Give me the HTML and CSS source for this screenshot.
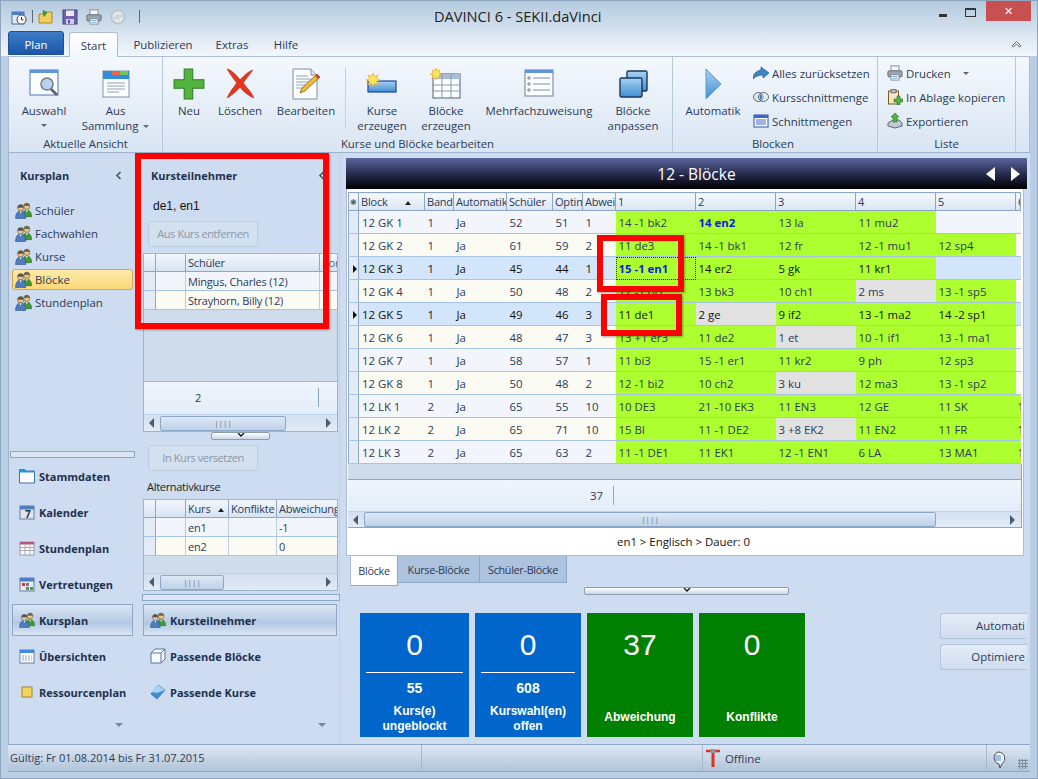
FILE: index.html
```html
<!DOCTYPE html>
<html lang="de">
<head>
    <meta charset="UTF-8">
    <meta name="viewport" content="width=device-width, initial-scale=1.0">
    <title>DAVINCI 6 - SEKII.daVinci</title>
    <link rel="stylesheet" href="styles.css">
</head>
<body>
<svg class="defs" width="0" height="0">
    <defs>
        <linearGradient id="blueFill" x1="0" y1="0" x2="0" y2="1"><stop offset="0" stop-color="#a9d2f2"/><stop offset="1" stop-color="#3f8fd0"/></linearGradient>
        <symbol id="people" viewBox="0 0 18 18">
            <circle cx="12.500" cy="4.500" r="3.300" fill="#f0c48f" stroke="#6b5a3a" stroke-width=".6"/>
            <path d="M9.300 4.500c0-2.300 1.500-3.500 3.200-3.500s3.200 1.200 3.200 3.500c-2-.2-4.400-.2-6.400 0z" fill="#6e6a50"/>
            <path d="M8 15.500c0-5 2-7 4.500-7s5 2 5 7z" fill="#3f9a35" stroke="#24651e" stroke-width=".6"/>
            <path d="M11.500 8.600l1 2.600 1-2.600z" fill="#fff"/>
            <circle cx="6" cy="6.200" r="3.400" fill="#f0c48f" stroke="#5c5c50" stroke-width=".6"/>
            <path d="M2.700 6.200c0-2.400 1.500-3.600 3.300-3.600s3.300 1.200 3.300 3.600c-2-.3-4.600-.3-6.600 0z" fill="#55584c"/>
            <path d="M.6 17.500c0-5.500 2.300-8 5.400-8s5.400 2.500 5.400 8z" fill="#4f7cc0" stroke="#2c4c85" stroke-width=".6"/>
            <path d="M5 9.700l1 2.800 1-2.800z" fill="#fff"/>
        </symbol>
        <symbol id="printer" viewBox="0 0 18 18">
            <rect x="4.500" y="1" width="9" height="6" fill="#f3f5f8" stroke="#7e8791"/>
            <rect x="1" y="6.500" width="16" height="7" rx="1.500" fill="#9aa3ad" stroke="#5f6872"/>
            <rect x="4.500" y="11" width="9" height="6" fill="#fff" stroke="#7e8791"/>
            <path d="M6 13h6M6 15h6" stroke="#6fa7d8"/>
        </symbol>
    </defs>
</svg>
<div class="window">
    <header class="titlebar">
        <div class="quick">
            <svg class="ico16" viewBox="0 0 16 16"><rect x="1" y="3" width="12" height="12" fill="#dfeafa" stroke="#4c6f9e"/><rect x="1" y="3" width="12" height="3" fill="#4f7fc0"/><circle cx="10.500" cy="10.500" r="4.500" fill="#fff" stroke="#54606e" stroke-width="1.200"/><path d="M10.500 8v2.800h2" fill="none" stroke="#333"/></svg>
            <span class="quick-sep"></span>
            <svg class="ico16" viewBox="0 0 16 16"><path d="M1 5h5l1-2h7v11H1z" fill="#f1cf5e" stroke="#a8892c"/><path d="M5 1.500l4 2-3 4z" fill="#3ea33a" stroke="#236d21" stroke-width=".6"/></svg>
            <svg class="ico16" viewBox="0 0 16 16"><rect x="1" y="1" width="14" height="14" fill="#6e62a8" stroke="#4b427f"/><rect x="4" y="1.500" width="8" height="5.500" fill="#ece9f6"/><rect x="4" y="10" width="8" height="5" fill="#cfcbe4"/><rect x="6" y="11" width="2" height="3.500" fill="#5a4f96"/></svg>
            <svg class="ico16" viewBox="0 0 18 18"><use href="#printer"/></svg>
            <svg class="ico16" viewBox="0 0 16 16"><circle cx="8" cy="8" r="7" fill="#cfd6dc" stroke="#b4bdc6"/><path d="M4 8a4 4 0 017-2.500M12 8a4 4 0 01-7 2.500" fill="none" stroke="#eef2f5" stroke-width="1.500"/></svg>
            <span class="quick-sep quick-sep-last"></span>
        </div>
        <div class="apptitle">DAVINCI 6 - SEKII.daVinci</div>
        <div class="winbtns">
            <span class="btn-min"></span>
            <span class="btn-max"></span>
            <span class="btn-close">✕</span>
        </div>
    </header>

    <nav class="tabs">
        <span class="tab-plan">Plan</span>
        <span class="tab tab-active">Start</span>
        <span class="tab tab-pub">Publizieren</span>
        <span class="tab tab-ext">Extras</span>
        <span class="tab tab-hlp">Hilfe</span>
        <svg class="collapse" width="11" height="8" viewBox="0 0 11 8"><path d="M1 6l4.500-4.500L10 6l-1.500 1-3-3-3 3z" fill="#fff" stroke="#444" stroke-width=".8"/></svg>
    </nav>

    <section class="ribbon">
        <div class="group group-view">
            <div class="group-btns">
                <div class="rbtn">
                    <svg class="ico32" viewBox="0 0 32 32"><rect x="2" y="2" width="28" height="25" fill="#fbfdff" stroke="#4c76b5"/><rect x="2" y="2" width="28" height="3" fill="#5f95dc"/><circle cx="19" cy="16" r="6" fill="#b7d3ee" stroke="#77808a" stroke-width="1.600"/><path d="M23 21l6 6" stroke="#5b6068" stroke-width="2.500"/></svg>
                    <span>Auswahl</span><i class="caret caret-below"></i>
                </div>
                <div class="rbtn">
                    <svg class="ico32" viewBox="0 0 32 32"><rect x="3" y="3" width="26" height="26" fill="#fff" stroke="#7f95ae"/><rect x="3" y="3" width="26" height="8" fill="#2f8edc"/><rect x="12" y="3" width="8" height="4" fill="#e2674e"/><rect x="20" y="3" width="8" height="4" fill="#79c255"/><path d="M7 15h18M7 18h18M7 21h18M7 24h12" stroke="#8ea2b8"/></svg>
                    <span>Aus<br>Sammlung <i class="caret"></i></span>
                </div>
            </div>
            <div class="group-label">Aktuelle Ansicht</div>
        </div>

        <div class="group group-edit">
            <div class="group-btns">
                <div class="rbtn">
                    <svg class="ico32" viewBox="0 0 30 30"><path d="M10.500 1h8v10h10.500v8H18.500v10h-8V19H1v-8h9.500z" fill="#54b33e" stroke="#2f7d24"/></svg>
                    <span>Neu</span>
                </div>
                <div class="rbtn">
                    <svg class="ico32" viewBox="0 0 30 30"><path d="M3 1c4 1 8 5 12 10 4-4 8-8 12-9-3 4-7 9-9 12 3 4 8 9 10 14-5-2-10-6-13-10-4 4-8 8-12 10 2-5 6-10 9-14C9 10 5 5 3 1z" fill="#e5351f" stroke="#b62512" stroke-width=".6"/></svg>
                    <span>Löschen</span>
                </div>
                <div class="rbtn">
                    <svg class="ico32" viewBox="0 0 32 32"><path d="M3 1h18l6 6v24H3z" fill="#fbfdff" stroke="#7f8ea0"/><path d="M21 1v6h6" fill="#dfe8f2" stroke="#7f8ea0"/><path d="M6 8h12M6 11h15M6 14h12M6 17h9M6 20h7" stroke="#8ea2b8"/><path d="M27 6l3 3-15 14-5 2 2-5z" fill="#f0b93a" stroke="#8a6418" stroke-width=".8"/><path d="M27 6l3 3-2 2-3-3z" fill="#d9452e"/></svg>
                    <span>Bearbeiten</span>
                </div>
                <div class="rbtn rbtn-sep">
                    <svg class="ico32" viewBox="0 0 32 32"><rect x="2" y="13" width="28" height="11" fill="url(#blueFill)" stroke="#17479b" stroke-width="1.200"/><path d="M7 5l1.500 3.500L12 7l-1.500 3.500L14 12l-3.500 1.500L12 17l-3.500-1.500L7 19l-1.500-3.500L2 17l1.500-3.500L0 12l3.500-1.500L2 7l3.500 1.500z" fill="#fbe45b" stroke="#e0a526" stroke-width=".6"/></svg>
                    <span>Kurse<br>erzeugen</span>
                </div>
                <div class="rbtn">
                    <svg class="ico32" viewBox="0 0 32 32"><rect x="3" y="6" width="27" height="24" fill="#fbfdff" stroke="#67788e" stroke-width="1.200"/><rect x="3" y="6" width="27" height="5" fill="#a9bdd5"/><path d="M3 17h27M3 23h27M12 6v24M21 6v24" stroke="#8a99ab"/><path d="M6 0l1.300 3L10 1.800 9 5l3 1.200L9 7.500l1 3-2.700-1.200L6 12 4.700 9.300 2 10.500l1-3L0 6.200 3 5 2 1.800 4.700 3z" fill="#fbe45b" stroke="#e0a526" stroke-width=".6"/></svg>
                    <span>Blöcke<br>erzeugen</span>
                </div>
                <div class="rbtn">
                    <svg class="ico32" viewBox="0 0 32 32"><rect x="2" y="2" width="28" height="26" fill="#fbfdff" stroke="#6b7f9b"/><rect x="2" y="2" width="28" height="3" fill="#5f95dc"/><path d="M10 10h17M10 16h17M10 22h17" stroke="#7b90ab"/><circle cx="6" cy="10" r="1.200" fill="none" stroke="#6b7f9b"/><circle cx="6" cy="16" r="1.200" fill="none" stroke="#6b7f9b"/><circle cx="6" cy="22" r="1.200" fill="none" stroke="#6b7f9b"/></svg>
                    <span>Mehrfachzuweisung</span>
                </div>
                <div class="rbtn">
                    <svg class="ico32" viewBox="0 0 32 32"><rect x="10" y="3" width="20" height="20" rx="1.500" fill="url(#blueFill)" stroke="#17365f" stroke-width="1.400"/><rect x="3" y="10" width="22" height="19" rx="1.500" fill="url(#blueFill)" stroke="#17365f" stroke-width="1.400"/></svg>
                    <span>Blöcke<br>anpassen</span>
                </div>
            </div>
            <div class="group-label">Kurse und Blöcke bearbeiten</div>
        </div>

        <div class="group group-block">
            <div class="group-btns">
                <div class="rbtn">
                    <svg class="ico32" viewBox="0 0 32 32"><path d="M9 1l15 15L9 31z" fill="url(#blueFill)" stroke="#5b9ad5"/></svg>
                    <span>Automatik</span>
                </div>
                <div class="smallcol">
                    <div class="sbtn">
                        <svg class="ico16" viewBox="0 0 16 16"><path d="M0 14c0-5 3-8 8-9V2l8 6-6 5v-3c-4 0-7 1-10 4z" fill="#3d85c6" stroke="#1f5a93" stroke-width=".7"/></svg>
                        <span>Alles zurücksetzen</span>
                    </div>
                    <div class="sbtn">
                        <svg class="ico16" viewBox="0 0 16 16"><ellipse cx="5.500" cy="8" rx="5" ry="4.500" fill="#dfe6ee" stroke="#5f6b7a"/><ellipse cx="10.500" cy="8" rx="5" ry="4.500" fill="#dfe6ee" fill-opacity=".5" stroke="#5f6b7a"/><path d="M8 4.400c1.800 2 1.800 5.200 0 7.200-1.800-2-1.800-5.200 0-7.200z" fill="#3f7fc4"/></svg>
                        <span>Kursschnittmenge</span>
                    </div>
                    <div class="sbtn">
                        <svg class="ico16" viewBox="0 0 16 16"><rect x="1" y="2" width="14" height="12" fill="#fff" stroke="#2b50b0"/><rect x="1" y="2" width="14" height="3" fill="#3767d0"/><path d="M3 7h10M3 9h10M3 11h10" stroke="#3767d0"/></svg>
                        <span>Schnittmengen</span>
                    </div>
                </div>
            </div>
            <div class="group-label group-label-left">Blocken</div>
        </div>

        <div class="group group-list">
            <div class="smallcol">
                <div class="sbtn">
                    <svg class="ico16" viewBox="0 0 18 18"><use href="#printer"/></svg>
                    <span>Drucken</span><i class="caret caret-side"></i>
                </div>
                <div class="sbtn">
                    <svg class="ico16" viewBox="0 0 16 16"><rect x="1.500" y="2" width="10" height="13" fill="#f6e7c2" stroke="#7a5a1e"/><rect x="4" y=".7" width="5" height="3" fill="#c9ccd0" stroke="#666"/><path d="M10 7h3v3h3v3h-3v3h-3v-3H7v-3h3z" fill="#4fb33c" stroke="#26701b" stroke-width=".6"/></svg>
                    <span>In Ablage kopieren</span>
                </div>
                <div class="sbtn">
                    <svg class="ico16" viewBox="0 0 16 16"><path d="M1 10l5-3h6l3 3v3l-7 2-7-2z" fill="#c3cad2" stroke="#596470"/><path d="M8 0l4 4h-2v5H6V4H4z" fill="#4fb33c" stroke="#26701b" stroke-width=".6"/></svg>
                    <span>Exportieren</span>
                </div>
            </div>
            <div class="group-label">Liste</div>
        </div>
    </section>

    <main class="main">
        <aside class="sidebar">
            <div class="pane-head">
                <b>Kursplan</b>
                <svg width="7" height="9" viewBox="0 0 7 9"><path d="M5.500 1L2 4.500 5.500 8" fill="none" stroke="#46536b" stroke-width="1.600"/></svg>
            </div>
            <ul class="linklist">
                <li><svg class="ico17"><use href="#people"/></svg>Schüler</li>
                <li><svg class="ico17"><use href="#people"/></svg>Fachwahlen</li>
                <li><svg class="ico17"><use href="#people"/></svg>Kurse</li>
                <li class="link-on"><svg class="ico17"><use href="#people"/></svg>Blöcke</li>
                <li><svg class="ico17"><use href="#people"/></svg>Stundenplan</li>
            </ul>
            <div class="nav-split"></div>
            <ul class="navlist">
                <li><svg class="ico16" viewBox="0 0 16 16"><path d="M.5 3V1.500h5L7 3h8.500v12H.5z" fill="#fbfdff" stroke="#3f6fa8"/><path d="M.5 1.500h5L7 3h8.500v1.500H.5z" fill="#1e9be8"/></svg>Stammdaten</li>
                <li><svg class="ico16" viewBox="0 0 16 16"><rect x="1" y="2" width="14" height="13" fill="#dfe5ec" stroke="#6b7f9b"/><rect x="1" y="2" width="14" height="3.500" fill="#4f7fc0"/><text x="6" y="14" class="cal-day">7</text></svg>Kalender</li>
                <li><svg class="ico16" viewBox="0 0 16 16"><rect x="1" y="2" width="14" height="13" fill="#fff" stroke="#8d98a5"/><rect x="1" y="2" width="14" height="2.500" fill="#b45a78"/><path d="M1 7.500h14M1 10.500h14M6 4.500V15M11 4.500V15" stroke="#a2aab3"/></svg>Stundenplan</li>
                <li><svg class="ico16" viewBox="0 0 16 16"><rect x="1" y="2" width="14" height="13" fill="#e6ebf1" stroke="#6b7f9b"/><rect x="1" y="2" width="14" height="3.500" fill="#4f7fc0"/><rect x="3" y="7" width="3" height="3" fill="#d33"/><rect x="7" y="7" width="3" height="3" fill="#777"/><rect x="11" y="11" width="3" height="3" fill="#3a3"/><rect x="7" y="11" width="3" height="3" fill="#777"/></svg>Vertretungen</li>
                <li class="nav-on"><svg class="ico16"><use href="#people"/></svg>Kursplan</li>
                <li><svg class="ico16" viewBox="0 0 16 16"><rect x="1" y="2" width="14" height="13" fill="#fff" stroke="#6b7f9b"/><rect x="1" y="2" width="14" height="3" fill="#3f8be0"/><path d="M3 8h10M3 10h10M3 12h10" stroke="#8ea2b8" stroke-dasharray="2 1"/></svg>Übersichten</li>
                <li><svg class="ico16" viewBox="0 0 16 16"><rect x="3" y="3" width="10" height="10" fill="#f5d35f" stroke="#a5852a"/></svg>Ressourcenplan</li>
            </ul>
            <i class="more"></i>
        </aside>

        <aside class="middle">
            <div class="pane-head pane-head-mid">
                <b>Kursteilnehmer</b>
                <svg width="7" height="9" viewBox="0 0 7 9"><path d="M5.500 1L2 4.500 5.500 8" fill="none" stroke="#46536b" stroke-width="1.600"/></svg>
            </div>
            <div class="selname">de1, en1</div>
            <div class="ghost ghost-top">Aus Kurs entfernen</div>
            <div class="minigrid minigrid-people">
                <div class="mg-row mg-head"><span></span><span></span><span>Schüler</span><span class="clip">Kor</span></div>
                <div class="mg-row"><span class="mg-sel"></span><span></span><span>Mingus, Charles (12)</span><span></span></div>
                <div class="mg-row mg-alt"><span class="mg-sel"></span><span></span><span>Strayhorn, Billy (12)</span><span></span></div>
                <div class="mg-empty mg-empty-tall"></div>
                <div class="mg-sum"><span class="mg-sum-num">2</span></div>
                <div class="hscroll">
                    <i class="sc-left"></i><div class="sc-track"><div class="sc-thumb sc-thumb-a">||||</div></div><i class="sc-right"></i>
                </div>
            </div>
            <div class="handle handle-mid"><svg width="8" height="4" viewBox="0 0 8 4"><path d="M1 0l3 3 3-3" fill="none" stroke="#111" stroke-width="1.300"/></svg></div>
            <div class="ghost ghost-low">In Kurs versetzen</div>
            <div class="alt-label">Alternativkurse</div>
            <div class="minigrid minigrid-alt">
                <div class="mg-row mg-head"><span></span><span></span><span>Kurs <i class="sort"></i></span><span>Konflikte</span><span>Abweichung</span></div>
                <div class="mg-row"><span class="mg-sel"></span><span></span><span>en1</span><span></span><span>-1</span></div>
                <div class="mg-row mg-alt"><span class="mg-sel"></span><span></span><span>en2</span><span></span><span>0</span></div>
                <div class="mg-empty"></div>
                <div class="hscroll">
                    <i class="sc-left"></i><div class="sc-track"><div class="sc-thumb sc-thumb-b">||||</div></div><i class="sc-right"></i>
                </div>
            </div>
            <div class="nav-split nav-split-mid"></div>
            <ul class="navlist navlist-mid">
                <li class="nav-on"><svg class="ico16"><use href="#people"/></svg>Kursteilnehmer</li>
                <li><svg class="ico16" viewBox="0 0 16 16"><path d="M1 5l4-4h10v10l-4 4H1z" fill="#f5f8fc" stroke="#5577a5"/><path d="M1 5h10v10M11 5l4-4" fill="none" stroke="#5577a5"/></svg>Passende Blöcke</li>
                <li><svg class="ico16" viewBox="0 0 16 16"><path d="M8 1l7 5-8 9-6-5z" fill="#3f8fd0" stroke="#2a6aa3" stroke-width=".7"/><path d="M8 1l7 5-8 3-6-1z" fill="#a7d2f2"/></svg>Passende Kurse</li>
            </ul>
            <i class="more more-mid"></i>
        </aside>

        <section class="content">
            <div class="bluebar">
                <span class="bluebar-title">12 - Blöcke</span>
                <svg class="bluebar-arrows" width="36" height="16" viewBox="0 0 36 16"><path d="M10 1L1 8l9 7zM26 1l9 7-9 7z" fill="#fff"/></svg>
            </div>
            <div class="sheet">
                <table class="blocks">
                    <thead>
                        <tr>
                            <th class="c-sel">❋</th>
                            <th class="c-block">Block<i class="sort sort-block"></i></th>
                            <th class="c-band">Band</th>
                            <th class="c-auto">Automatik</th>
                            <th class="c-sch">Schüler</th>
                            <th class="c-opt">Optim</th>
                            <th class="c-abw">Abwei</th>
                            <th class="c-day">1</th>
                            <th class="c-day">2</th>
                            <th class="c-day">3</th>
                            <th class="c-day">4</th>
                            <th class="c-day">5</th>
                            <th class="c-last">6</th>
                        </tr>
                    </thead>
                    <tbody>
                        <tr><td class="c-sel"></td><td>12 GK 1</td><td>1</td><td>Ja</td><td>52</td><td>51</td><td>1</td><td class="g">14 -1 bk2</td><td class="g hit">14 en2</td><td class="g">13 la</td><td class="g">11 mu2</td><td></td><td></td></tr>
                        <tr class="alt"><td class="c-sel"></td><td>12 GK 2</td><td>1</td><td>Ja</td><td>61</td><td>59</td><td>2</td><td class="g">11 de3</td><td class="g">14 -1 bk1</td><td class="g">12 fr</td><td class="g">12 -1 mu1</td><td class="g">12 sp4</td><td></td></tr>
                        <tr class="cur"><td class="c-sel"><i class="rowmark"></i></td><td>12 GK 3</td><td>1</td><td>Ja</td><td>45</td><td>44</td><td>1</td><td class="g hit focus">15 -1 en1</td><td class="g">14 er2</td><td class="g">5 gk</td><td class="g">11 kr1</td><td></td><td></td></tr>
                        <tr class="alt"><td class="c-sel"></td><td>12 GK 4</td><td>1</td><td>Ja</td><td>50</td><td>48</td><td>2</td><td class="g">12 -1 bi1</td><td class="g">13 bk3</td><td class="g">10 ch1</td><td class="n">2 ms</td><td class="g">13 -1 sp5</td><td></td></tr>
                        <tr class="cur"><td class="c-sel"><i class="rowmark"></i></td><td>12 GK 5</td><td>1</td><td>Ja</td><td>49</td><td>46</td><td>3</td><td class="g">11 de1</td><td class="n">2 ge</td><td class="g">9 if2</td><td class="g">13 -1 ma2</td><td class="g">14 -2 sp1</td><td></td></tr>
                        <tr class="alt"><td class="c-sel"></td><td>12 GK 6</td><td>1</td><td>Ja</td><td>48</td><td>47</td><td>3</td><td class="g">13 +1 er3</td><td class="g">11 de2</td><td class="n">1 et</td><td class="g">10 -1 if1</td><td class="g">13 -1 ma1</td><td></td></tr>
                        <tr><td class="c-sel"></td><td>12 GK 7</td><td>1</td><td>Ja</td><td>58</td><td>57</td><td>1</td><td class="g">11 bi3</td><td class="g">15 -1 er1</td><td class="g">11 kr2</td><td class="g">9 ph</td><td class="g">12 sp3</td><td></td></tr>
                        <tr class="alt"><td class="c-sel"></td><td>12 GK 8</td><td>1</td><td>Ja</td><td>50</td><td>48</td><td>2</td><td class="g">12 -1 bi2</td><td class="g">10 ch2</td><td class="n">3 ku</td><td class="g">12 ma3</td><td class="g">13 -1 sp2</td><td></td></tr>
                        <tr><td class="c-sel"></td><td>12 LK 1</td><td>2</td><td>Ja</td><td>65</td><td>55</td><td>10</td><td class="g">10 DE3</td><td class="g">21 -10 EK3</td><td class="g">11 EN3</td><td class="g">12 GE</td><td class="g">11 SK</td><td class="g">1</td></tr>
                        <tr class="alt"><td class="c-sel"></td><td>12 LK 2</td><td>2</td><td>Ja</td><td>65</td><td>71</td><td>10</td><td class="g">15 BI</td><td class="g">11 -1 DE2</td><td class="n">3 +8 EK2</td><td class="g">11 EN2</td><td class="g">11 FR</td><td class="g">1</td></tr>
                        <tr><td class="c-sel"></td><td>12 LK 3</td><td>2</td><td>Ja</td><td>65</td><td>63</td><td>2</td><td class="g">11 -1 DE1</td><td class="g">11 EK1</td><td class="g">12 -1 EN1</td><td class="g">6 LA</td><td class="g">13 MA1</td><td class="g">1</td></tr>
                    </tbody>
                </table>
                <div class="sheet-empty"></div>
                <div class="sheet-sum"><span>37</span></div>
                <div class="hscroll hscroll-main">
                    <i class="sc-left"></i><div class="sc-track"><div class="sc-thumb sc-thumb-main">||||</div></div><i class="sc-right"></i>
                </div>
                <div class="crumb">en1 &gt; Englisch &gt; Dauer: 0</div>
            </div>
            <div class="sheet-tabs">
                <span class="stab stab-on">Blöcke</span>
                <span class="stab stab-k">Kurse-Blöcke</span>
                <span class="stab stab-s">Schüler-Blöcke</span>
            </div>
            <div class="handle handle-main"><svg width="8" height="4" viewBox="0 0 8 4"><path d="M1 0l3 3 3-3" fill="none" stroke="#111" stroke-width="1.300"/></svg></div>
            <div class="tilerow">
                <div class="tile tile-blue tile-first">
                    <div class="tile-num">0</div><div class="tile-rule"></div>
                    <div class="tile-sub">55</div><div class="tile-txt">Kurs(e)<br>ungeblockt</div>
                </div>
                <div class="tile tile-blue">
                    <div class="tile-num">0</div><div class="tile-rule"></div>
                    <div class="tile-sub">608</div><div class="tile-txt">Kurswahl(en)<br>offen</div>
                </div>
                <div class="tile tile-green">
                    <div class="tile-num">37</div><div class="tile-txt tile-txt-solo">Abweichung</div>
                </div>
                <div class="tile tile-green">
                    <div class="tile-num">0</div><div class="tile-txt tile-txt-solo">Konflikte</div>
                </div>
                <div class="sidebtns">
                    <div class="sidebtn">Automati</div>
                    <div class="sidebtn">Optimiere</div>
                </div>
            </div>
        </section>
    </main>

    <footer class="status">
        <span class="st-valid">Gültig: Fr 01.08.2014 bis Fr 31.07.2015</span>
        <span class="st-mid"></span>
        <span class="st-off">
            <svg width="16" height="20" viewBox="0 0 16 20"><path d="M1 3h14" stroke="#e0301e" stroke-width="2.500"/><path d="M6.500 4h3v15h-3z" fill="#e0301e"/><rect x="5.500" y="1" width="5" height="4" fill="#8d98a5"/></svg>
            Offline
        </span>
        <span class="st-msg">
            <svg width="16" height="18" viewBox="0 0 16 18"><path d="M8 1a7 6.500 0 014 11.800L10 17l-1-4A7 6.500 0 018 1z" fill="#eef3f9" stroke="#444c57"/><path d="M5 5h6M5 7h6M5 9h6" stroke="#4a8fd6"/></svg>
        </span>
        <i class="grip"></i>
    </footer>

    <div class="mark mark-big"></div>
    <div class="mark mark-top"></div>
    <div class="mark mark-low"></div>
</div>
</body>
</html>
```

FILE: styles.css
```css
* {
    box-sizing: border-box;
}

html, body {
    margin: 0;
    padding: 0;
}

body {
    width: 1038px;
    height: 779px;
    overflow: hidden;
    font-family: "Open Sans", "Noto Sans", sans-serif;
    font-size: 11.4px;
    color: #2c3a58;
}

ul {
    list-style: none;
    margin: 0;
    padding: 0;
}

i {
    font-style: normal;
}

.defs {
    position: absolute;
}

.ico16 {
    width: 16px;
    height: 16px;
    flex: none;
}

.ico17 {
    width: 17px;
    height: 17px;
    flex: none;
}

.ico32 {
    width: 32px;
    height: 32px;
}

.cal-day {
    font-size: 10px;
    font-weight: 700;
    fill: #234;
}

.window {
    position: relative;
    width: 1038px;
    height: 779px;
    overflow: hidden;
    background: #b9cee4;
    border: 1px solid #8fa4bd;
    display: flex;
    flex-direction: column;
}

/* title bar */
.titlebar {
    height: 30px;
    display: flex;
    background: linear-gradient(#b4cbdf, #d4e1ee);
    position: relative;
}

.quick {
    display: flex;
    align-items: center;
    gap: 8px;
    padding: 1px 0 0 10px;
    width: 380px;
}

.quick-sep {
    width: 1px;
    height: 13px;
    background: #5d6a79;
    margin: 0 -3px;
}

.quick-sep-last {
    margin-left: 5px;
}

.apptitle {
    width: 400px;
    padding-left: 53px;
    line-height: 30px;
    font-size: 14.600px;
    color: #222;
    white-space: nowrap;
}

.winbtns {
    margin-left: auto;
    display: flex;
    padding-right: 6px;
}

.btn-min {
    width: 8px;
    height: 3px;
    background: #333;
    margin: 13px 18px 0 0;
}

.btn-max {
    width: 11px;
    height: 9px;
    border: 1px solid #333;
    border-top-width: 2px;
    margin: 7px 10px 0 0;
}

.btn-close {
    width: 45px;
    height: 20px;
    background: #c75050;
    color: #fff;
    text-align: center;
    font-size: 11px;
    line-height: 20px;
}

/* ribbon tabs */
.tabs {
    height: 25px;
    display: flex;
    align-items: flex-end;
    position: relative;
    padding-left: 7px;
    background: linear-gradient(#d6e3ef, #f3f7fc);
}

.tab-plan {
    width: 56px;
    height: 24px;
    margin-bottom: 1px;
    background: linear-gradient(#3d7cc9, #1c56a8);
    border: 1px solid #1d4e96;
    border-radius: 3px 3px 0 0;
    color: #fff;
    text-align: center;
    line-height: 25px;
}

.tab {
    height: 25px;
    line-height: 28px;
    text-align: center;
}

.tab-active {
    width: 49px;
    margin-left: 5px;
    line-height: 25px;
    background: linear-gradient(#fff, #f0f6fd);
    border: 1px solid #a9bdd5;
    border-bottom: 0;
    border-radius: 3px 3px 0 0;
    position: relative;
    top: 1px;
    z-index: 1;
}

.tab-pub {
    width: 86px;
    margin-left: 2px;
}

.tab-ext {
    width: 52px;
}

.tab-hlp {
    width: 50px;
    margin-left: 3px;
}

.collapse {
    position: absolute;
    right: 15px;
    top: 9px;
}

/* ribbon */
.ribbon {
    height: 97px;
    margin: 0 7px;
    display: flex;
    background: linear-gradient(#f4f8fd, #d9e5f3);
    border: 1px solid #a9bdd5;
    border-bottom-color: #9db2cb;
    flex: none;
}

.group {
    display: flex;
    flex-direction: column;
    border-right: 1px solid #b6c8dc;
    position: relative;
}

.group-view {
    width: 154px;
}

.group-edit {
    width: 510px;
}

.group-block {
    width: 205px;
}

.group-list {
    width: 138px;
}

.group-btns {
    flex: 1;
    display: grid;
    align-items: start;
}

.group-view .group-btns {
    grid-template-columns: 70px 73px;
}

.group-edit .group-btns {
    grid-template-columns: 52px 50px 82px 70px 58px 128px 60px;
}

.group-block .group-btns {
    grid-template-columns: 80px 120px;
}

.group-label {
    text-align: center;
    height: 21px;
    line-height: 21px;
}

.group-label-left {
    text-align: left;
    padding-left: 79px;
}

.rbtn {
    display: flex;
    flex-direction: column;
    align-items: center;
    padding-top: 11px;
    line-height: 15px;
    text-align: center;
    position: relative;
    white-space: nowrap;
}

.rbtn svg {
    margin-bottom: 3px;
}

.rbtn-sep::before {
    content: "";
    position: absolute;
    left: -2px;
    top: 10px;
    height: 60px;
    width: 1px;
    background: #c3d2e3;
}

.caret {
    display: inline-block;
    border: 3px solid transparent;
    border-top: 3px solid #5b6678;
    border-bottom: 0;
    vertical-align: middle;
    margin-left: 2px;
}

.caret-below {
    margin: 6px 0 0;
}

.caret-side {
    margin-left: 9px;
}

.smallcol {
    display: flex;
    flex-direction: column;
    padding-top: 4px;
    flex: 1;
}

.sbtn {
    height: 24px;
    display: flex;
    align-items: center;
    gap: 3px;
    white-space: nowrap;
}

.group-list .smallcol {
    padding-left: 9px;
}

/* main area */
.main {
    flex: 1;
    display: flex;
    margin: 0 7px;
    min-height: 0;
    background: #cddcf0;
}

.sidebar {
    width: 134px;
    display: flex;
    flex-direction: column;
    position: relative;
    border-left: 1px solid #9db2cb;
    flex: none;
}

.pane-head {
    height: 44px;
    display: flex;
    align-items: center;
    justify-content: space-between;
    padding: 0 20px 0 11px;
    font-size: 11px;
    color: #22304f;
    flex: none;
}

.linklist {
    height: 254px;
    padding: 2px 9px 2px 3px;
    flex: none;
}

.linklist li {
    height: 23px;
    display: flex;
    align-items: center;
    gap: 3px;
    padding-left: 3px;
}

.linklist .link-on {
    height: 21px;
    margin: 1px 0;
    background: linear-gradient(#fde9a8, #fcd978);
    border: 1px solid #d3a74a;
    border-radius: 3px;
    padding-left: 2px;
}

.nav-split {
    height: 7px;
    margin: 0 7px 0 1px;
    border: 1px solid #8ea7c6;
    background: #dbe6f4;
    flex: none;
}

.navlist li {
    height: 36px;
    display: flex;
    align-items: center;
    gap: 4px;
    padding-left: 10px;
    font-weight: 700;
    color: #22304f;
    font-size: 11px;
}

.navlist li.nav-on {
    height: 32px;
    margin: 2px 9px 2px 3px;
    padding-left: 6px;
    border: 1px solid #8ea7c6;
    background: linear-gradient(#dbe7f5, #b3c9e3 60%, #d9e6f4);
}

.navlist-mid li {
    padding-left: 7px;
}

.navlist-mid li.nav-on {
    margin: 2px 2px 2px 0;
    padding-left: 6px;
}

.more {
    position: absolute;
    left: 106px;
    bottom: 17px;
    border: 4px solid transparent;
    border-top: 4px solid #7c8899;
    border-bottom: 0;
}

.more-mid {
    left: 176px;
}

.middle {
    width: 198px;
    display: flex;
    flex-direction: column;
    position: relative;
    border-right: 1px solid #c2d2e6;
    padding-left: 1px;
    flex: none;
}

.pane-head-mid {
    padding: 0 14px 0 8px;
}

.selname {
    height: 24px;
    padding-left: 10px;
    line-height: 18px;
    font-family: "Liberation Sans", Arial, sans-serif;
    font-size: 12px;
    color: #111;
    flex: none;
}

.ghost {
    width: 110px;
    height: 26px;
    margin-left: 5px;
    border: 1px solid #bccde0;
    border-radius: 3px;
    background: #d3e0f0;
    color: #8c98a8;
    font-size: 11px;
    letter-spacing: -.4px;
    text-align: center;
    line-height: 24px;
    flex: none;
}

.minigrid {
    width: 195px;
    border: 1px solid #9fb3ca;
    background: #cfdcec;
    flex: none;
    font-size: 11px;
    letter-spacing: -.2px;
}

.minigrid-people {
    margin-top: 6px;
    height: 179px;
}

.minigrid-alt {
    height: 92px;
}

.mg-row {
    height: 19px;
    display: grid;
    line-height: 20px;
    border-bottom: 1px solid #a8c4e4;
    background: #f2f6fc;
    overflow: hidden;
}

.minigrid-people .mg-row {
    grid-template-columns: 12px 30px 134px 1fr;
}

.minigrid-alt .mg-row {
    grid-template-columns: 12px 30px 43px 48px 1fr;
}

.mg-row span {
    padding-left: 2px;
    border-right: 1px solid #b9cce2;
    white-space: nowrap;
    overflow: hidden;
}

.mg-row span:last-child {
    border-right: 0;
}

.mg-alt {
    background: #fcfbf3;
}

.mg-sel {
    background: #e3ebf6;
    border-right-color: #8ea7c6 !important;
}

.mg-head {
    height: 18px;
    line-height: 18px;
    background: linear-gradient(#f3f7fc, #d6e3f3);
    border-bottom: 1px solid #8ea7c6;
}

.mg-head span {
    border-right-color: #8ea7c6;
}

.mg-empty {
    height: 17px;
}

.mg-empty-tall {
    height: 72px;
    border-bottom: 1px solid #a6b8ce;
}

.mg-sum {
    height: 32px;
    background: linear-gradient(#f0f5fd, #e2ecf9);
    position: relative;
}

.mg-sum-num {
    position: absolute;
    left: 51px;
    top: 8px;
}

.mg-sum::after {
    content: "";
    position: absolute;
    left: 174px;
    top: 6px;
    width: 1px;
    height: 19px;
    background: #8ea7c6;
}

.hscroll {
    height: 17px;
    display: flex;
    align-items: center;
    background: linear-gradient(#d3e0f0, #e2ebf6);
    border-top: 1px solid #c2d2e6;
}

.sc-left, .sc-right {
    width: 0;
    height: 0;
    border: 5px solid transparent;
    flex: none;
}

.sc-left {
    border-right: 5px solid #4d5b70;
    border-left: 0;
    margin: 0 6px 0 5px;
}

.sc-right {
    border-left: 5px solid #4d5b70;
    border-right: 0;
    margin: 0 6px 0 7px;
}

.sc-track {
    flex: 1;
    height: 15px;
}

.sc-thumb {
    height: 15px;
    border: 1px solid #8ea7c6;
    border-radius: 2px;
    background: linear-gradient(#dce8f6, #bfd2e9);
    text-align: center;
    line-height: 12px;
    font-size: 8px;
    letter-spacing: 0;
    color: #66758a;
}

.sc-thumb-a {
    width: 126px;
}

.sc-thumb-b {
    width: 64px;
}

.sc-thumb-main {
    width: 572px;
}

.handle {
    display: flex;
    justify-content: center;
    height: 8px;
    border: 1px solid #8b9bb0;
    border-radius: 2px;
    background: linear-gradient(#fff, #c8d6e8);
    flex: none;
}

.handle-mid {
    width: 59px;
    margin-left: 68px;
}

.ghost-low {
    margin-top: 5px;
}

.alt-label {
    height: 28px;
    padding-left: 4px;
    line-height: 32px;
    color: #222;
    font-size: 11px;
    letter-spacing: -.3px;
    flex: none;
}

.nav-split-mid {
    margin: 3px 0 1px -1px;
    width: 198px;
}

.clip {
    color: #5d6a79;
}

.sort {
    display: inline-block;
    border: 3px solid transparent;
    border-bottom: 4px solid #222;
    border-top: 0;
    margin-left: 5px;
    vertical-align: middle;
}

.sort-block {
    margin-left: 17px;
}

/* right side */
.content {
    flex: 1;
    display: flex;
    flex-direction: column;
    padding: 5px 3px 0 6px;
    min-width: 0;
}

.bluebar {
    height: 31px;
    display: flex;
    align-items: center;
    justify-content: center;
    padding-left: 20px;
    position: relative;
    background: linear-gradient(#5a659b, #24284a 55%, #000);
    color: #fff;
    font-size: 15.500px;
    flex: none;
}

.bluebar-arrows {
    position: absolute;
    right: 6px;
    top: 8px;
}

.sheet {
    width: 678px;
    height: 367px;
    flex: none;
    background: #fff;
    border: 1px solid #a9bdd5;
    border-top: 0;
    padding: 3px 2px 0 1px;
    display: flex;
    flex-direction: column;
}

.blocks {
    width: 672px;
    table-layout: fixed;
    border-collapse: collapse;
    flex: none;
}

.blocks th {
    height: 18px;
    padding: 0 0 0 2px;
    font-weight: 400;
    font-size: 11px;
    letter-spacing: -.2px;
    text-align: left;
    white-space: nowrap;
    overflow: hidden;
    background: linear-gradient(#f6f9fd, #d9e5f4);
    border: 1px solid #8ea7c6;
    border-width: 1px 1px 1px 0;
}

.blocks td {
    height: 23px;
    padding: 0 0 0 3px;
    white-space: nowrap;
    overflow: hidden;
    background: #f2f6fc;
    border-bottom: 1px solid #a8c4e4;
}

.blocks td:last-child {
    padding-left: 2px;
}

.blocks .alt td {
    background: #fcfbf3;
}

.blocks .cur td {
    background: #d3e5fb;
    color: #111;
}

.blocks td.c-sel, .blocks .alt td.c-sel, .blocks .cur td.c-sel {
    background: #e3ebf6;
    border-right: 1px solid #8ea7c6;
    border-left: 1px solid #8ea7c6;
    padding: 0;
}

.blocks tr td.g {
    background: #adff2f;
}

.blocks tr td.n {
    background: #e1e1e1;
}

.blocks tr td.hit {
    color: #0a1ee0;
    font-weight: 700;
}

.blocks tr td.focus {
    outline: 1px dotted #1a1ac8;
    outline-offset: -1px;
}

.c-sel {
    width: 10px;
    text-align: center;
}

.blocks th.c-sel {
    font-size: 8px;
    padding: 0;
    border-left-width: 1px;
    text-align: center;
}

.c-block {
    width: 66px;
}

.c-band {
    width: 29px;
}

.c-auto {
    width: 53px;
}

.c-sch {
    width: 46px;
}

.c-opt {
    width: 30px;
}

.c-abw {
    width: 33px;
}

.c-day {
    width: 80px;
}

.c-last {
    width: 5px;
}

.rowmark {
    display: inline-block;
    border: 4px solid transparent;
    border-left: 4px solid #111;
    border-right: 0;
    margin-left: 2px;
}

.sheet-empty {
    height: 16px;
    background: #cfdcec;
    border-bottom: 1px solid #8ea7c6;
    border-right: 1px solid #8ea7c6;
    width: 674px;
    flex: none;
}

.sheet-sum {
    height: 31px;
    width: 674px;
    background: linear-gradient(#f0f5fd, #e2ecf9);
    border-right: 1px solid #8ea7c6;
    position: relative;
    flex: none;
}

.sheet-sum span {
    position: absolute;
    left: 242px;
    top: 8px;
}

.sheet-sum::after {
    content: "";
    position: absolute;
    left: 265px;
    top: 6px;
    width: 1px;
    height: 19px;
    background: #8ea7c6;
}

.hscroll-main {
    width: 674px;
    flex: none;
    border-bottom: 1px solid #8ea7c6;
    border-right: 1px solid #8ea7c6;
}

.crumb {
    flex: 1;
    text-align: center;
    line-height: 27px;
    color: #111;
    padding-right: 2px;
}

.sheet-tabs {
    display: flex;
    height: 30px;
    flex: none;
    padding-left: 4px;
    font-size: 10.800px;
    letter-spacing: -.3px;
}

.stab {
    height: 27px;
    text-align: center;
    line-height: 28px;
    background: #adc3dd;
    border: 1px solid #8ea7c6;
    border-top: 0;
    border-left: 0;
    flex: none;
}

.stab-on {
    width: 48px;
    height: 30px;
    line-height: 30px;
    background: #fff;
    border-left: 1px solid #a9bdd5;
}

.stab-k {
    width: 82px;
}

.stab-s {
    width: 87px;
}

.handle-main {
    width: 205px;
    margin-left: 238px;
    margin-top: 1px;
}

.tilerow {
    display: flex;
    gap: 6px;
    margin-top: 18px;
    padding-left: 14px;
    height: 124px;
    flex: none;
}

.tile {
    width: 106px;
    color: #fff;
    text-align: center;
    font-family: "Liberation Sans", Arial, sans-serif;
    position: relative;
}

.tile-first {
    width: 109px;
}

.tile-blue {
    background: #0066cc;
}

.tile-green {
    background: #008000;
}

.tile-num {
    font-size: 30px;
    line-height: 34px;
    padding-top: 15px;
}

.tile-rule {
    height: 1px;
    margin: 10px 6px 0;
    background: #fff;
}

.tile-sub {
    font-size: 14px;
    font-weight: 700;
    line-height: 16px;
    margin-top: 7px;
}

.tile-txt {
    font-size: 12px;
    font-weight: 700;
    line-height: 15px;
    margin-top: 8px;
}

.tile-txt-solo {
    position: absolute;
    left: 0;
    right: 0;
    top: 97px;
    margin: 0;
}

.sidebtns {
    margin-left: auto;
    width: 87px;
    display: flex;
    flex-direction: column;
    gap: 5px;
}

.sidebtn {
    height: 26px;
    border: 1px solid #b3c5db;
    border-right: 0;
    border-radius: 3px 0 0 3px;
    background: linear-gradient(#e4edf8, #cfdcee);
    text-align: right;
    line-height: 24px;
    white-space: nowrap;
    overflow: hidden;
    padding-right: 2px;
}

/* status bar */
.status {
    height: 28px;
    margin: 0 7px 6px;
    display: flex;
    align-items: center;
    background: linear-gradient(#dce7f4, #b2c4d9);
    border-top: 1px solid #8ea7c6;
    border-bottom: 1px solid #8ea7c6;
    flex: none;
    position: relative;
}

.st-valid {
    width: 414px;
    height: 100%;
    padding-left: 2px;
    line-height: 26px;
    font-size: 11px;
    border-right: 1px solid #a6b8ce;
    white-space: nowrap;
}

.st-mid {
    width: 280px;
}

.st-off {
    display: flex;
    align-items: center;
    gap: 4px;
    width: 285px;
    height: 100%;
    padding-left: 2px;
    border-left: 1px solid #a6b8ce;
    border-right: 1px solid #a6b8ce;
}

.st-msg {
    padding: 3px 0 0 3px;
    display: flex;
}

.grip {
    position: absolute;
    right: 2px;
    bottom: 2px;
    width: 10px;
    height: 10px;
    background: radial-gradient(circle, #7e8c9f 1px, transparent 1.2px) 0 0 / 3px 3px;
}

/* red highlight frames drawn over the shot */
.mark {
    position: absolute;
    border: 6px solid #f00;
    box-shadow: 1px 1px 2px rgba(0,0,0,.35);
    pointer-events: none;
}

.mark-big {
    left: 134px;
    top: 152px;
    width: 194px;
    height: 176px;
}

.mark-top {
    left: 596px;
    top: 234px;
    width: 87px;
    height: 57px;
}

.mark-low {
    left: 600px;
    top: 293px;
    width: 81px;
    height: 42px;
}
```
